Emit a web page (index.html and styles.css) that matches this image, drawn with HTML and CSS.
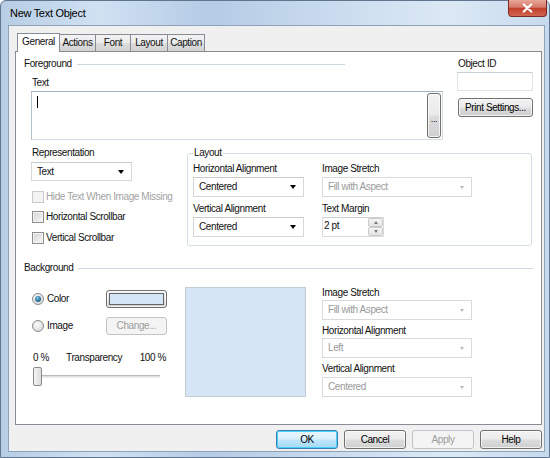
FILE: index.html
```html
<html>
	<head>
		<meta charset="utf-8">
		<title>New Text Object</title>
		<link rel="stylesheet" href="styles.css">
	</head>
	<body>
		<div class="window">
			<div class="titlebar">
				<span class="title">New Text Object</span>
				<div class="close">
					<svg width="11" height="10" viewBox="0 0 11 10"><path d="M1.8 1.5 L9.2 8.5 M9.2 1.5 L1.8 8.5" stroke="#fff" stroke-width="2.3" stroke-linecap="round"/></svg>
				</div>
			</div>
			<div class="client">
				<div class="tabs">
					<div class="tab active t-general">General</div>
					<div class="tab t-actions">Actions</div>
					<div class="tab t-font">Font</div>
					<div class="tab t-layout">Layout</div>
					<div class="tab t-caption">Caption</div>
				</div>
				<div class="panel">
					<div class="top">
						<div class="fg">
							<div class="group-head short">Foreground</div>
							<div class="label indent">Text</div>
							<div class="textbox">
								<span class="caret"></span>
								<div class="btn dots">...</div>
							</div>
						</div>
						<div class="objid">
							<div class="label">Object ID</div>
							<div class="input"></div>
							<div class="btn print">Print Settings...</div>
						</div>
					</div>

					<div class="middle">
						<div class="repr">
							<div class="label">Representation</div>
							<div class="combo repr-combo"><span>Text</span><i class="arrow"></i></div>
							<div class="check-row disabled r1"><span class="check"></span>Hide Text When Image Missing</div>
							<div class="check-row r2"><span class="check"></span>Horizontal Scrollbar</div>
							<div class="check-row r3"><span class="check"></span>Vertical Scrollbar</div>
						</div>
						<fieldset class="layout-box">
							<legend>Layout</legend>
							<div class="layout-grid">
								<div class="field">
									<div class="label">Horizontal Alignment</div>
									<div class="combo"><span>Centered</span><i class="arrow"></i></div>
								</div>
								<div class="field">
									<div class="label">Image Stretch</div>
									<div class="combo off"><span>Fill with Aspect</span><i class="arrow"></i></div>
								</div>
								<div class="field">
									<div class="label">Vertical Alignment</div>
									<div class="combo"><span>Centered</span><i class="arrow"></i></div>
								</div>
								<div class="field">
									<div class="label">Text Margin</div>
									<div class="spin">
										<span class="spin-text">2 pt</span>
										<div class="spin-btns">
											<div class="spin-btn"><i class="up"></i></div>
											<div class="spin-btn"><i class="down"></i></div>
										</div>
									</div>
								</div>
							</div>
						</fieldset>
					</div>

					<div class="group-head bg-head">Background</div>
					<div class="bottom">
						<div class="bg-left">
							<div class="radio-row">
								<label><span class="radio on"></span>Color</label>
								<div class="btn swatch-btn"><span class="swatch"></span></div>
							</div>
							<div class="radio-row second">
								<label><span class="radio"></span>Image</label>
								<div class="btn off">Change...</div>
							</div>
							<div class="trans-row">
								<span>0 %</span>
								<span class="trans-name">Transparency</span>
								<span class="trans-max">100 %</span>
							</div>
							<div class="slider">
								<span class="thumb"></span>
								<span class="track"></span>
							</div>
						</div>
						<div class="preview"></div>
						<div class="bg-right">
							<div class="label">Image Stretch</div>
							<div class="combo off"><span>Fill with Aspect</span><i class="arrow"></i></div>
							<div class="label gap">Horizontal Alignment</div>
							<div class="combo off"><span>Left</span><i class="arrow"></i></div>
							<div class="label gap">Vertical Alignment</div>
							<div class="combo off last"><span>Centered</span><i class="arrow"></i></div>
						</div>
					</div>
				</div>

				<div class="buttons">
					<div class="btn default">OK</div>
					<div class="btn">Cancel</div>
					<div class="btn off">Apply</div>
					<div class="btn">Help</div>
				</div>
			</div>
		</div>
	</body>
</html>
```

FILE: styles.css
```css
* {
	margin: 0;
	padding: 0;
	box-sizing: border-box
}

body {
	width: 550px;
	height: 458px;
	overflow: hidden;
	font: 10px/12px "Liberation Sans", Arial, sans-serif;
	letter-spacing: -0.4px;
	color: #111;
	background: #fff
}

.window {
	width: 550px;
	height: 458px;
	display: flex;
	flex-direction: column;
	border: 1px solid #5f768e;
	border-radius: 6px 6px 0 0;
	background: linear-gradient(90deg, #b7cde4 0%, #d0e1f2 18%, #b5cce5 38%, #c9dbee 60%, #dce9f5 82%, #c6d9ed 100%)
}

.titlebar {
	height: 24px;
	display: flex;
	align-items: flex-start
}

.title {
	padding: 6px 0 0 9px;
	font-size: 11px;
	line-height: 13px;
	letter-spacing: -0.3px;
	color: #000
}

.close {
	margin: -1px 2px 0 auto;
	width: 39px;
	height: 17px;
	display: flex;
	align-items: center;
	justify-content: center;
	border: 1px solid #7a2c22;
	border-top: none;
	border-radius: 0 0 4px 4px;
	background: linear-gradient(#e8a698, #d6786a 45%, #c2402c 52%, #cf6650 100%)
}

.client {
	margin-left: 7px;
	width: 537px;
	height: 427px;
	background: #f0f0f0;
	border: 1px solid #8ea2b8
}

/* tabs */
.tabs {
	height: 26px;
	display: flex;
	align-items: flex-end;
	padding-left: 8px
}

.tab {
	height: 17px;
	margin-bottom: 1px;
	margin-left: -1px;
	border: 1px solid #898c95;
	border-bottom: none;
	text-align: center;
	line-height: 16px;
	background: linear-gradient(#f3f3f3, #ebebeb 50%, #dedede 50%, #d2d2d2)
}

.tab.active {
	height: 19px;
	margin-bottom: 0;
	margin-left: 0;
	position: relative;
	z-index: 1;
	background: #fff;
	line-height: 15px
}

.t-general { width: 43px }
.t-actions { width: 37px }
.t-font { width: 36px }
.t-layout { width: 38px }
.t-caption { width: 38px }

.panel {
	margin: -1px 0 0 6px;
	width: 527px;
	height: 374px;
	background: #fff;
	border: 1px solid #898c95;
	padding: 6px 8px 0 8px
}

.label {
	height: 12px;
	white-space: nowrap
}

.indent {
	margin: 7px 0 0 8px
}

.group-head {
	height: 12px;
	display: flex;
	align-items: center
}

.group-head::after {
	content: "";
	flex: 1;
	height: 1px;
	margin-left: 5px;
	background: #cfd8e0
}

.group-head.short {
	width: 321px
}

/* foreground */
.top {
	display: flex
}

.fg {
	width: 419px
}

.textbox {
	margin: 2px 0 0 7px;
	width: 412px;
	height: 49px;
	display: flex;
	align-items: flex-start;
	border: 1px solid #a9b6c4;
	border-color: #a2b0bf #d4dce4 #d4dce4 #b4c0cc
}

.caret {
	width: 1px;
	height: 12px;
	margin: 4px 0 0 5px;
	background: #000
}

.dots {
	margin: 1px 1px 0 auto;
	width: 14px;
	height: 45px;
	font-size: 9px;
	color: #555;
	padding-top: 6px
}

.objid {
	margin-left: 14px;
	width: 76px
}

.objid .label {
	margin-left: 1px
}

.input {
	margin-top: 2px;
	width: 76px;
	height: 19px;
	border: 1px solid #dfe3e8;
	border-top-color: #c9cfd6;
	background: #fff
}

.btn {
	display: flex;
	align-items: center;
	justify-content: center;
	border: 1px solid #707070;
	border-radius: 3px;
	background: linear-gradient(#f2f2f2, #ebebeb 48%, #dddddd 52%, #cfcfcf);
	box-shadow: inset 0 0 0 1px rgba(255, 255, 255, 0.7);
	color: #000;
	white-space: nowrap
}

.btn.off {
	border-color: #c1c4c7;
	background: #f4f4f4;
	box-shadow: none;
	color: #9d9d9d
}

.print {
	margin: 7px 0 0 1px;
	width: 75px;
	height: 19px
}

/* representation + layout */
.middle {
	margin-top: 7px;
	display: flex
}

.repr {
	margin-left: 8px;
	width: 155px
}

.combo {
	height: 20px;
	display: flex;
	align-items: center;
	justify-content: space-between;
	padding: 0 7px 0 5px;
	border: 1px solid #d7d7d7;
	border-top-color: #cbcbcb;
	background: #fff;
	white-space: nowrap
}

.combo .arrow {
	width: 0;
	height: 0;
	border-left: 3.5px solid transparent;
	border-right: 3.5px solid transparent;
	border-top: 4px solid #000
}

.combo.off {
	color: #9a9a9a;
	border-color: #dadada
}

.combo.off .arrow {
	border-left-width: 2.5px;
	border-right-width: 2.5px;
	border-top: 3px solid #b8b8b8
}

.repr-combo {
	margin: 3px 0 0 -1px;
	width: 101px;
	height: 19px
}

.check-row {
	height: 14px;
	display: flex;
	align-items: center;
	white-space: nowrap
}

.check {
	width: 12px;
	height: 12px;
	margin-right: 2px;
	border: 1px solid #8f8f8f;
	background: linear-gradient(135deg, #d4d4d4, #f7f7f7);
	box-shadow: inset 0 0 0 1px #f2f2f2
}

.check-row.disabled {
	color: #a3a3a3
}

.check-row.disabled .check {
	border-color: #cbcbcb;
	background: #f4f4f4
}

.r1 { margin-top: 9px }
.r2 { margin-top: 6px }
.r3 { margin-top: 7px }

.layout-box {
	width: 345px;
	border: 1px solid #d5dde5;
	border-radius: 3px;
	padding: 4px 0 8px 5px;
	min-width: 0
}

.layout-box legend {
	padding: 0 1px;
	line-height: 12px
}

.layout-grid {
	display: grid;
	grid-template-columns: 111px 150px;
	column-gap: 18px;
	row-gap: 6px
}

.field .label {
	height: 13px
}

.field .combo,
.field .spin {
	margin-top: 1px
}

.spin {
	width: 62px;
	height: 20px;
	display: flex;
	border: 1px solid #dcdcdc;
	border-top-color: #cfcfcf
}

.spin-text {
	flex: 1;
	padding: 2px 0 0 1px
}

.spin-btns {
	width: 15px;
	display: flex;
	flex-direction: column
}

.spin-btn {
	flex: 1;
	display: flex;
	align-items: center;
	justify-content: center;
	border: 1px solid #c9c9c9;
	border-radius: 2px;
	background: linear-gradient(#f6f6f6, #e4e4e4)
}

.spin-btn i {
	width: 0;
	height: 0;
	border-left: 2.5px solid transparent;
	border-right: 2.5px solid transparent
}

.spin-btn .up {
	border-bottom: 3px solid #7a7a7a
}

.spin-btn .down {
	border-top: 3px solid #7a7a7a
}

/* background */
.bg-head {
	margin-top: 16px
}

.bottom {
	margin-top: 13px;
	display: flex
}

.bg-left {
	margin-left: 8px;
	width: 153px;
	padding-top: 3px
}

.radio-row {
	display: grid;
	grid-template-columns: 74px 61px;
	height: 18px;
	align-items: center
}

.radio-row.second {
	margin-top: 9px
}

.radio-row label {
	display: flex;
	align-items: center
}

.radio-row .btn {
	height: 18px
}

.radio {
	width: 12px;
	height: 12px;
	margin-right: 3px;
	border: 1px solid #8c8c8c;
	border-radius: 50%;
	background: radial-gradient(circle at 40% 35%, #fbfbfb, #d2d2d2);
	display: flex;
	align-items: center;
	justify-content: center
}

.radio.on::after {
	content: "";
	width: 6px;
	height: 6px;
	border-radius: 50%;
	background: radial-gradient(circle at 40% 35%, #7cc7ea, #1c5d86 70%)
}

.swatch-btn {
	padding: 2px
}

.swatch {
	width: 100%;
	height: 100%;
	border: 1px solid #666;
	background: #d4e5f7
}

.trans-row {
	margin: 17px 0 0 1px;
	width: 133px;
	height: 12px;
	display: flex
}

.trans-name {
	margin-left: 17px
}

.trans-max {
	margin-left: auto
}

.slider {
	margin: 3px 0 0 1px;
	height: 19px;
	display: flex;
	align-items: center
}

.thumb {
	width: 9px;
	height: 19px;
	border: 1px solid #8a8a8a;
	border-radius: 2px;
	background: linear-gradient(90deg, #f4f4f4, #dcdcdc)
}

.track {
	width: 118px;
	height: 3px;
	border-top: 1px solid #b9b9b9;
	border-bottom: 1px solid #ececec;
	background: #e2e2e2
}

.preview {
	width: 121px;
	height: 110px;
	border: 1px solid #c3cbd3;
	background: #d5e5f6
}

.bg-right {
	margin-left: 16px;
	width: 150px
}

.bg-right .label {
	height: 13px
}

.bg-right .label.gap {
	margin-top: 5px
}

.bg-right .combo.last {
	margin-top: 1px
}

/* dialog buttons */
.buttons {
	margin-top: 5px;
	padding-right: 2px;
	display: flex;
	justify-content: flex-end;
	gap: 6px
}

.buttons .btn {
	width: 62px;
	height: 19px
}

.btn.default {
	border-color: #3c7fb1;
	background: linear-gradient(#eaf6fd, #d9f0fc 48%, #bee6fd 52%, #a7d9f5);
	box-shadow: inset 0 0 0 1px #48d2fb
}
```
